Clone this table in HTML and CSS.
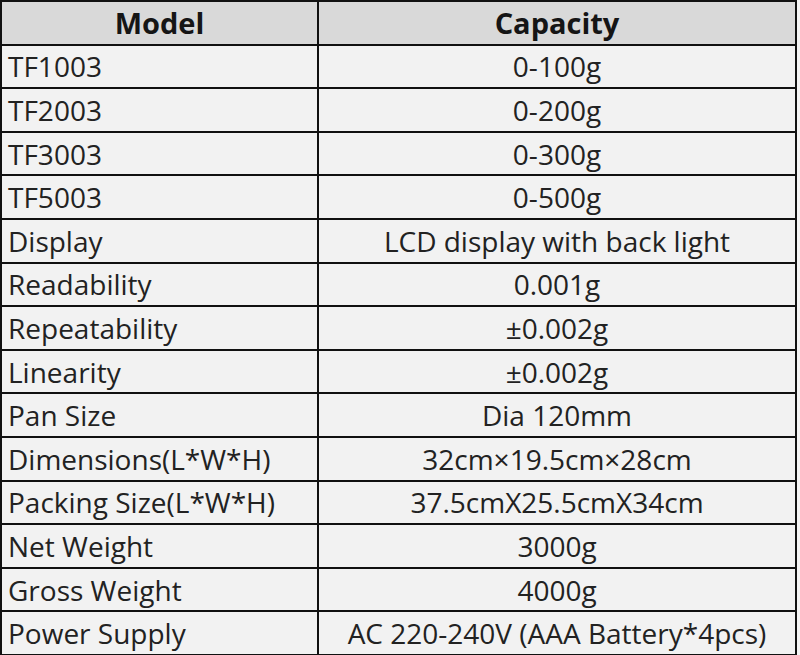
FILE: index.html
```html
<!DOCTYPE html>
<html>
<head>
<meta charset="utf-8">
<link rel="stylesheet" href="styles.css">
</head>
<body>
<table class="spec">
  <thead>
    <tr><th class="col-model">Model</th><th>Capacity</th></tr>
  </thead>
  <tbody>
    <tr><td class="label">TF1003</td><td>0-100g</td></tr>
    <tr><td class="label">TF2003</td><td>0-200g</td></tr>
    <tr><td class="label">TF3003</td><td>0-300g</td></tr>
    <tr><td class="label">TF5003</td><td>0-500g</td></tr>
    <tr><td class="label">Display</td><td>LCD display with back light</td></tr>
    <tr><td class="label">Readability</td><td>0.001g</td></tr>
    <tr><td class="label">Repeatability</td><td>±0.002g</td></tr>
    <tr><td class="label">Linearity</td><td>±0.002g</td></tr>
    <tr><td class="label">Pan Size</td><td>Dia 120mm</td></tr>
    <tr><td class="label">Dimensions(L*W*H)</td><td>32cm×19.5cm×28cm</td></tr>
    <tr><td class="label">Packing Size(L*W*H)</td><td>37.5cmX25.5cmX34cm</td></tr>
    <tr><td class="label">Net Weight</td><td>3000g</td></tr>
    <tr><td class="label">Gross Weight</td><td>4000g</td></tr>
    <tr><td class="label">Power Supply</td><td>AC 220-240V (AAA Battery*4pcs)</td></tr>
  </tbody>
</table>
</body>
</html>
```
FILE: styles.css
```css
html, body {
  margin: 0;
  padding: 0;
  background: #f4f4f4;
}
.spec {
  border-collapse: collapse;
  width: 797px;
  font-family: "Open Sans", "Noto Sans", sans-serif;
  font-size: 28px;
  color: #222;
  background: #f2f2f2;
  table-layout: fixed;
}
.spec tr {
  height: 43.6px;
}
.spec th, .spec td {
  border: 2px solid #111;
  padding: 0 6px;
  text-align: center;
  line-height: 1;
  white-space: nowrap;
}
.spec th {
  background: #d9d9d9;
  font-weight: 700;
  font-size: 29px;
  color: #151515;
}
.spec .col-model {
  width: 303px;
}
.spec td.label {
  text-align: left;
}
```
